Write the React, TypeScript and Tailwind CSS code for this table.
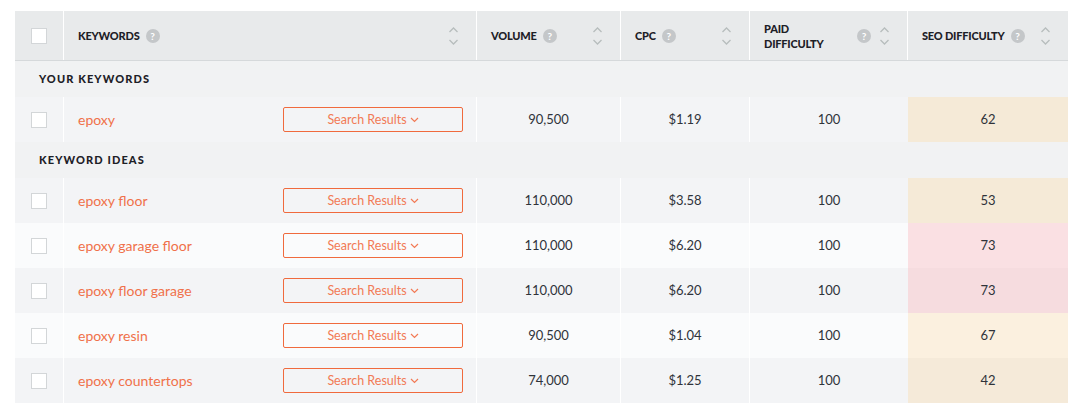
import React from "react";

const COLS = "grid grid-cols-[49px_413px_144px_129px_158px_160px]";

interface Row {
  keyword: string;
  volume: string;
  cpc: string;
  paid: string;
  seo: string;
  seoBg: string;
  rowBg: string;
}

const yourKeywords: Row[] = [
  { keyword: "epoxy", volume: "90,500", cpc: "$1.19", paid: "100", seo: "62", seoBg: "bg-[#f5ead7]", rowBg: "bg-[#f3f4f6]" },
];

const ideas: Row[] = [
  { keyword: "epoxy floor", volume: "110,000", cpc: "$3.58", paid: "100", seo: "53", seoBg: "bg-[#f5ead7]", rowBg: "bg-[#f3f4f6]" },
  { keyword: "epoxy garage floor", volume: "110,000", cpc: "$6.20", paid: "100", seo: "73", seoBg: "bg-[#fae0e3]", rowBg: "bg-[#fafbfc]" },
  { keyword: "epoxy floor garage", volume: "110,000", cpc: "$6.20", paid: "100", seo: "73", seoBg: "bg-[#f6dcdf]", rowBg: "bg-[#f3f4f6]" },
  { keyword: "epoxy resin", volume: "90,500", cpc: "$1.04", paid: "100", seo: "67", seoBg: "bg-[#fbf0df]", rowBg: "bg-[#fafbfc]" },
  { keyword: "epoxy countertops", volume: "74,000", cpc: "$1.25", paid: "100", seo: "42", seoBg: "bg-[#f5ead9]", rowBg: "bg-[#f3f4f6]" },
];

export default function App() {
  return (
    <div className="w-[1090px] h-[406px] bg-white pt-[11px] pl-[15px] font-['Lato',sans-serif] overflow-hidden">
      <div className="w-[1053px]">
        <HeaderRow />
        <SectionRow label="YOUR KEYWORDS" />
        {yourKeywords.map((r) => (
          <DataRow key={r.keyword} row={r} />
        ))}
        <SectionRow label="KEYWORD IDEAS" />
        {ideas.map((r) => (
          <DataRow key={r.keyword} row={r} />
        ))}
      </div>
    </div>
  );
}

function HeaderRow() {
  return (
    <div className={`${COLS} h-[50px] bg-[#e8eaeb] border-b border-[#d6d9db]`}>
      <div className="flex items-center justify-center border-r border-white">
        <Checkbox />
      </div>
      <HeaderCell label="KEYWORDS" />
      <HeaderCell label="VOLUME" />
      <HeaderCell label="CPC" />
      <HeaderCell label={<>PAID<br />DIFFICULTY</>} spread />
      <HeaderCell label="SEO DIFFICULTY" last />
    </div>
  );
}

function HeaderCell({ label, spread, last }: { label: React.ReactNode; spread?: boolean; last?: boolean }) {
  return (
    <div className={`flex items-center pl-[14px] pr-[17px] ${last ? "" : "border-r border-white"}`}>
      <span className="text-[11px] leading-[15px] font-black text-[#1d2027] tracking-[-0.2px]">{label}</span>
      {spread ? (
        <span className="ml-auto mr-[8px]"><Help /></span>
      ) : (
        <span className="ml-[6px]"><Help /></span>
      )}
      <span className={spread ? "" : "ml-auto"}>
        <SortArrows />
      </span>
    </div>
  );
}

function SectionRow({ label }: { label: string }) {
  return (
    <div className="h-[36px] bg-[#f1f2f3] flex items-center pl-[24px]">
      <span className="text-[11px] font-black tracking-[1.1px] text-[#1d2027]">{label}</span>
    </div>
  );
}

function DataRow({ row }: { row: Row }) {
  return (
    <div className={`${COLS} h-[45px] ${row.rowBg} text-[13px] text-[#2f333a]`}>
      <div className="flex items-center justify-center border-r border-white">
        <Checkbox />
      </div>
      <div className="flex items-center pl-[14px] pr-[13px] border-r border-white">
        <span className="text-[14px] text-[#f0714a]">{row.keyword}</span>
        <button className="ml-auto w-[180px] h-[25px] border border-[#f06a3d] rounded-[2px] flex items-center justify-center gap-[3px] text-[12.5px] leading-none pt-[1px] text-[#f27a55]">
          Search Results
          <svg width="9" height="6" viewBox="0 0 9 6" fill="none" stroke="#f27a55" strokeWidth="1.2">
            <path d="M1 1l3.5 3.5L8 1" />
          </svg>
        </button>
      </div>
      <div className="flex items-center justify-center border-r border-white">{row.volume}</div>
      <div className="flex items-center justify-center border-r border-white">{row.cpc}</div>
      <div className="flex items-center justify-center">{row.paid}</div>
      <div className={`flex items-center justify-center ${row.seoBg}`}>{row.seo}</div>
    </div>
  );
}

function Checkbox() {
  return <div className="w-[16px] h-[16px] bg-white border border-[#d3d6d8]" />;
}

function Help() {
  return (
    <span className="w-[14px] h-[14px] rounded-full bg-[#c4c7c9] text-white text-[10px] font-bold flex items-center justify-center leading-none">
      ?
    </span>
  );
}

function SortArrows() {
  return (
    <svg width="11" height="20" viewBox="0 0 11 20" fill="none" stroke="#b7bdbd" strokeWidth="1.3">
      <path d="M1.5 6l4-4 4 4" />
      <path d="M1.5 14l4 4 4-4" />
    </svg>
  );
}
